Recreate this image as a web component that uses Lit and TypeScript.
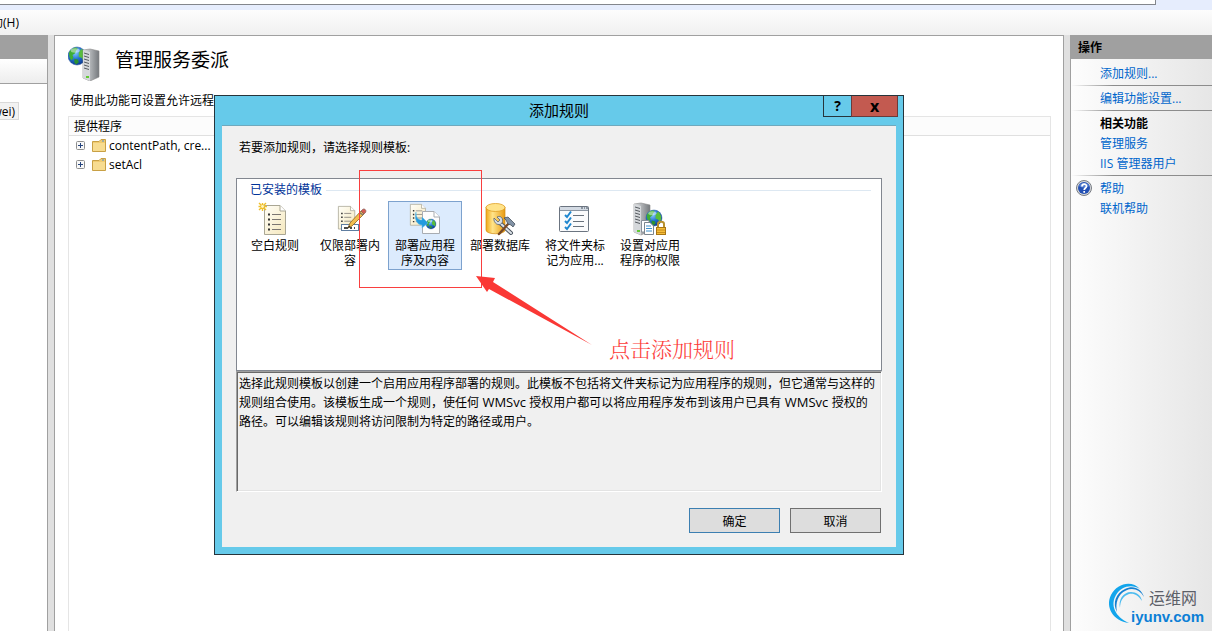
import { LitElement, html, css, svg } from "lit";
import { customElement, property, state } from "lit/decorators.js";

const globe = (cx: number, cy: number, r: number) => svg`
  <g transform="translate(${cx} ${cy}) scale(${r / 10})">
    <circle r="10" fill="url(#globe-sea)" stroke="#2a5aa0" stroke-width=".6"></circle>
    <path d="M-9 -3C-8 -7 -4 -9.500 -1 -9.500L1 -8L-1 -6L-2 -3L-5 -1L-4 2L-6 5C-8 3 -9 0 -9 -3Z" fill="#3fae35"></path>
    <path d="M2 -4L5 -8C8 -6 9.500 -2 9 2L7 5L5 2L2 1Z" fill="#58bd3c"></path>
    <path d="M-3 3L1 4L2 7L-1 9.500L-3 7Z" fill="#2c9230"></path>
    <ellipse cx="-2" cy="-6" rx="5" ry="2.500" fill="#fff" opacity=".45"></ellipse>
  </g>`;

const defs = svg`
  <defs>
    <radialGradient id="globe-sea" cx=".4" cy=".3" r=".75">
      <stop offset="0" stop-color="#8fd0ff"></stop>
      <stop offset=".5" stop-color="#2373d2"></stop>
      <stop offset="1" stop-color="#0a3287"></stop>
    </radialGradient>
    <linearGradient id="paper" x2="1" y2="1">
      <stop offset="0" stop-color="#fffef8"></stop>
      <stop offset="1" stop-color="#f5e8bd"></stop>
    </linearGradient>
    <linearGradient id="steel">
      <stop offset="0" stop-color="#e2e4e6"></stop>
      <stop offset="1" stop-color="#75797d"></stop>
    </linearGradient>
    <linearGradient id="gold">
      <stop offset="0" stop-color="#f0a818"></stop>
      <stop offset=".35" stop-color="#ffe48a"></stop>
      <stop offset="1" stop-color="#e89a10"></stop>
    </linearGradient>
  </defs>`;

const sheet = svg`
  <path d="M.5 .5H16L21.500 6V29.500H.5Z" fill="url(#paper)" stroke="#a9a694"></path>
  <path d="M16 .5V6H21.500" fill="#fff" stroke="#a9a694"></path>
  <path d="M4 9.500H6M4 14.500H6M4 19.500H6M4 24.500H6" stroke="#333" stroke-width="2"></path>
  <path d="M8 9.500H17M8 14.500H17M8 19.500H17M8 24.500H17" stroke="#7b7672"></path>`;

const tower = svg`
  <path d="M0 1L7 0L16 2V28L7 32L0 29Z" fill="url(#steel)" stroke="#888" stroke-width=".6"></path>
  <path d="M0 1L7 3V32L0 29Z" fill="#d5d8db"></path>
  <path d="M1 4L6 5.500M1 7L6 8.500M1 10L6 11.500M1 13L6 14.500M1 16L6 17.500M1 19L6 20.500" stroke="#565b60"></path>
  <rect x="3" y="27" width="3" height="2" fill="#62c935"></rect>`;

const icons: Record<string, unknown> = {
  blank: svg`
    <g transform="translate(5 2)">${sheet}</g>
    <path d="M3.500 0V8M-.5 3.500H8M0 0L7 7M7 0L0 7" stroke="#f0bf2a" stroke-width="1.400"></path>
    <circle cx="3.500" cy="3.500" r="1.400" fill="#fff6c0"></circle>`,
  content: svg`
    <g transform="translate(4 3) scale(.78)">${sheet}</g>
    <rect x="7.500" y="21.500" width="17" height="6" fill="#fff" stroke="#5f7da0"></rect>
    <path d="M10 25H14M16 25H18M20 25H21" stroke="#111" stroke-width="1.500"></path>
    <path d="M14 25L16 20L27 8L30 11L18 23Z" fill="#f2bd4e" stroke="#8d6420" stroke-width=".8"></path>
    <path d="M27 8L28.500 6.500C30 5 33 7 31.500 9.500L30 11Z" fill="#d55b52" stroke="#80605c" stroke-width=".7"></path>
    <path d="M25.500 9.500L29 12" stroke="#777" stroke-width="1.500"></path>
    <path d="M14 25L15 22.500L16.500 24Z" fill="#222"></path>`,
  application: svg`
    <g transform="translate(1 1) scale(.72)">${sheet}</g>
    <path d="M13.500 8.500H25L30.500 14V30.500H13.500Z" fill="#fdfdfd" stroke="#a8acb2"></path>
    <path d="M25 8.500V14H30.500" fill="#fff" stroke="#a8acb2"></path>
    ${globe(22, 21, 5)}
    <path d="M7 9C7 15 9 17 13 17V14L19 20L13 25V22C8 22 5 16 7 9Z" fill="#249ade" stroke="#63bce9" stroke-width=".5"></path>`,
  database: svg`
    <path d="M2 4V27C2 32 21 32 21 27V4Z" fill="url(#gold)" stroke="#d28c14" stroke-width=".7"></path>
    <ellipse cx="11.500" cy="4.500" rx="9.500" ry="4" fill="#ffe38a" stroke="#dfa024" stroke-width=".8"></ellipse>
    <path d="M16 20L27 30" stroke="#4d5660" stroke-width="4" stroke-linecap="round"></path>
    <path d="M16 20L27 30" stroke="#dce2e8" stroke-width="2" stroke-linecap="round"></path>
    <path d="M10 15L14 19L16 17L13 14C17 12 20 16 18 20C15 24 9 20 10 15Z" fill="#d5dce3" stroke="#59636e" stroke-width=".8"></path>
    <path d="M15 31L25 20" stroke="#7a4a26" stroke-width="2.500" stroke-linecap="round"></path>
    <path d="M20 15L24 14L31 21L29 24L27 22L24 21L22 17Z" fill="#8292a5" stroke="#45505c" stroke-width=".8"></path>`,
  checklist: svg`
    <rect x=".5" y="3.500" width="29" height="25" rx="1" fill="#fbfbfc" stroke="#6b7480"></rect>
    <path d="M1 5.500H29" stroke="#d3dae3" stroke-width="3"></path>
    <path d="M1 7.500H29" stroke="#8b95a2"></path>
    <path d="M22 5H24M25 5H26M27 5H29" stroke="#45505e"></path>
    <path d="M14 12.500H25M14 18.500H25M14 23.500H25" stroke="#68717c"></path>
    <path d="M6 12L8 14L12 8.500M6 18L8 20L12 14.500M6 24L8 26L12 20.500" fill="none" stroke="#1e86cf" stroke-width="2"></path>`,
  permission: svg`
    ${tower}
    ${globe(20, 15, 8)}
    <path d="M7.500 17.500H15V29H7.500Z" fill="#fff" stroke="#88919a"></path>
    <path d="M10.500 19.500H16L19.500 23V31.500H10.500Z" fill="#fff" stroke="#7b858f"></path>
    <path d="M12 23H17M12 25.500H18M12 28H18" stroke="#3e91ce"></path>
    <path d="M24 24V21C24 18 30 18 30 21V24" fill="none" stroke="#b8912f" stroke-width="2"></path>
    <rect x="22.500" y="24.500" width="9" height="7" fill="#f4bd3b" stroke="#a87514"></rect>
    <path d="M23 27H31M23 29.500H31" stroke="#c98e1c"></path>`,
};

interface Template {
  icon: string;
  label: string;
}

@customElement("rule-dialog")
class RuleDialog extends LitElement {
  @state() selected = 2;

  templates: Template[] = [
    { icon: "blank", label: "空白规则" },
    { icon: "content", label: "仅限部署内容" },
    { icon: "application", label: "部署应用程序及内容" },
    { icon: "database", label: "部署数据库" },
    { icon: "checklist", label: "将文件夹标记为应用..." },
    { icon: "permission", label: "设置对应用程序的权限" },
  ];

  static styles = css`
    :host {
      display: block;
      box-sizing: border-box;
      border: 1px solid #26343b;
      background: #66caea;
      padding: 0 7px 7px;
    }
    button {
      font: inherit;
      color: inherit;
      margin: 0;
      padding: 0;
    }
    .titlebar {
      display: grid;
      grid-template-columns: 75px 1fr 75px;
      height: 29px;
    }
    h2 {
      grid-column: 2;
      margin: 0;
      font-size: 15px;
      font-weight: 400;
      line-height: 28px;
      text-align: center;
    }
    .controls {
      display: flex;
      height: 21px;
      margin-right: -2px;
      justify-content: flex-end;
    }
    .control {
      box-sizing: border-box;
      width: 28px;
      flex: none;
      border: 1px solid #26343b;
      border-width: 0 0 1px 1px;
      background: #66caea;
      font-size: 14px;
      font-weight: 700;
      line-height: 20px;
    }
    .close {
      width: 47px;
      border-width: 0 1px 1px;
      background: #c35a50;
      border-color: #6b3a3a;
      font-size: 16px;
      line-height: 18px;
    }
    .client {
      border-top: 1px solid #6fa9bd;
      background: #f0f0f0;
      padding: 12px 14px 14px;
    }
    .prompt {
      margin: 0 0 20px;
      padding: 0 3px;
      line-height: 20px;
    }
    .list {
      box-sizing: border-box;
      height: 193px;
      border: 1px solid #828790;
      background: #fff;
    }
    .group {
      display: flex;
      align-items: center;
      gap: 4px;
      padding: 0 10px 0 13px;
      color: #003399;
      line-height: 20px;
      height: 22px;
    }
    .group::after {
      content: "";
      flex: 1;
      border-top: 1px solid #dde8f2;
    }
    .items {
      display: flex;
      gap: 1px;
      padding-left: 1px;
      align-items: flex-start;
    }
    .item {
      box-sizing: border-box;
      display: flex;
      flex-direction: column;
      align-items: center;
      gap: 3px;
      width: 74px;
      padding: 1px 5px;
      border: 1px solid transparent;
      background: none;
      line-height: 15px;
    }
    .item svg {
      width: 32px;
      height: 32px;
      overflow: visible;
    }
    .chosen {
      border-color: #7da2ce;
      background: #dcebfd;
    }
    .description {
      box-sizing: border-box;
      height: 121px;
      border: 1px solid #fff;
      border-top-color: #a0a0a0;
      border-left-color: #a0a0a0;
      box-shadow: inset 1px 1px #696969, inset -1px -1px #e3e3e3;
    }
    .description p {
      margin: 0;
      padding: 2px 5px 0 2px;
      line-height: 19px;
    }
    .description .term {
      font-size: 13px;
      line-height: 1;
    }
    .actions {
      display: flex;
      justify-content: flex-end;
      gap: 10px;
      margin-top: 16px;
      padding-right: 1px;
    }
    .action {
      box-sizing: border-box;
      width: 91px;
      height: 25px;
      border: 1px solid #707070;
      background: #dddddd;
    }
    .default {
      border-color: #3c7fb1;
    }
  `;

  render() {
    return html`
      <header class="titlebar">
        <h2>添加规则</h2>
        <div class="controls">
          <button class="control" aria-label="帮助">?</button>
          <button class="control close" aria-label="关闭">x</button>
        </div>
      </header>
      <div class="client">
        <p class="prompt">若要添加规则，请选择规则模板:</p>
        <section class="list">
          <div class="group">已安装的模板</div>
          <div class="items">
            ${this.templates.map(
              (t, i) => html`
                <button class="item ${i === this.selected ? "chosen" : ""}" @click=${() => (this.selected = i)}>
                  <svg viewBox="0 0 32 32" aria-hidden="true">${defs}${icons[t.icon]}</svg>
                  <span>${t.label}</span>
                </button>
              `
            )}
          </div>
        </section>
        <section class="description">
          <p>选择此规则模板以创建一个启用应用程序部署的规则。此模板不包括将文件夹标记为应用程序的规则，但它通常与这样的规则组合使用。该模板生成一个规则，使任何<span class="term"> WMSvc </span>授权用户都可以将应用程序发布到该用户已具有<span class="term"> WMSvc </span>授权的路径。可以编辑该规则将访问限制为特定的路径或用户。</p>
        </section>
        <div class="actions">
          <button class="action default">确定</button>
          <button class="action">取消</button>
        </div>
      </div>
    `;
  }
}

@customElement("provider-row")
class ProviderRow extends LitElement {
  @property() name = "";

  static styles = css`
    :host {
      display: flex;
      align-items: center;
      height: 19px;
      padding-left: 7px;
      line-height: 18px;
    }
    button {
      border: 0;
      padding: 0;
      background: none;
      display: flex;
      margin-right: 7px;
    }
    .folder {
      margin-right: 3px;
    }
  `;

  render() {
    return html`
      <button aria-label="展开">
        <svg width="9" height="9">
          <rect x=".5" y=".5" width="8" height="8" rx="1" fill="#f8f8f8" stroke="#8e8f8f"></rect>
          <path d="M2 4.500H7M4.500 2V7" stroke="#26457e"></path>
        </svg>
      </button>
      <svg class="folder" width="14" height="14">
        <path d="M.5 2.500H7L9 .5H13.500V12.500H.5Z" fill="#f0cb70" stroke="#c8a045"></path>
        <path d="M1 4H13V12H1Z" fill="#f7dc91"></path>
        <path d="M10 2H12" stroke="#4f8fd0"></path>
      </svg>
      <span>${this.name}</span>
    `;
  }
}

@customElement("app-root")
class AppRoot extends LitElement {
  static styles = css`
    :host {
      position: relative;
      display: flex;
      flex-direction: column;
      height: 100vh;
      overflow: hidden;
      background: #e0e0e0;
      color: #000;
      font-family: "Open Sans", "Noto Sans CJK SC", sans-serif;
      font-size: 12px;
    }
    .address {
      flex: none;
      height: 10px;
      padding-right: 56px;
      background: #e6edfd;
    }
    .field {
      height: 4px;
      border: 1px solid #83868c;
      border-width: 0 1px 1px 0;
      background: #fff;
    }
    .menubar {
      flex: none;
      height: 25px;
      background: linear-gradient(#fdfdfd, #f0f0f0);
    }
    .menu {
      display: flex;
      justify-content: flex-end;
      width: 19px;
      height: 23px;
      padding: 0;
      border: 0;
      background: none;
      font: inherit;
      white-space: nowrap;
      overflow: hidden;
      align-items: center;
    }
    .workspace {
      flex: 1;
      min-height: 0;
      display: grid;
      grid-template-columns: 48px 1fr 142px;
      column-gap: 6px;
    }
    .connections {
      border-right: 1px solid #a0a0a0;
      background: #fff;
    }
    .bar {
      height: 24px;
      background: #a0a0a0;
    }
    .tools {
      height: 24px;
      border-bottom: 1px solid #a0a0a0;
      background: linear-gradient(#fff, #ededed);
    }
    .server {
      box-sizing: border-box;
      display: flex;
      justify-content: flex-end;
      align-items: center;
      width: 19px;
      height: 18px;
      margin-top: 18px;
      padding-right: 3px;
      border: 1px solid #d9d9d9;
      border-left: 0;
      background: #f2f2f2;
      overflow: hidden;
    }
    .main {
      display: flex;
      flex-direction: column;
      border: 1px solid #a0a0a0;
      border-bottom: 0;
      background: #fff;
      padding: 9px 12px 0 13px;
    }
    .heading {
      display: flex;
      align-items: center;
      gap: 14px;
      height: 36px;
    }
    h1 {
      margin: 0;
      font-size: 19px;
      font-weight: 400;
      line-height: 28px;
      padding-bottom: 6px;
    }
    .intro {
      margin: 10px 0 5px;
      padding-left: 2px;
      line-height: 20px;
    }
    .providers {
      flex: 1;
      border: 1px solid #e5e5e5;
      border-bottom: 0;
    }
    .column {
      height: 18px;
      padding-left: 5px;
      border-bottom: 1px solid #e0e0e0;
      background: #fcfcfc;
      line-height: 20px;
    }
    .actions {
      display: flex;
      flex-direction: column;
      border-left: 1px solid #a0a0a0;
      background: linear-gradient(to right, #fdfdfd, #e6e6e6);
      line-height: 22px;
    }
    .actions h2 {
      height: 24px;
      margin: 0 0 4px;
      padding-left: 7px;
      background: #a0a0a0;
      font-size: 12px;
      line-height: 26px;
    }
    .actions h3 {
      height: 20px;
      margin: 0;
      padding-left: 29px;
      font-size: 12px;
    }
    .actions hr {
      width: 100%;
      height: 1px;
      margin: 2px 0;
      border: 0;
      background: linear-gradient(to right, transparent, #8c8c8c 30%);
    }
    .actions a {
      display: flex;
      height: 20px;
      padding-left: 29px;
      color: #0066cc;
      text-decoration: none;
    }
    .actions .help {
      padding-left: 5px;
      gap: 8px;
    }
    .help svg {
      margin-top: 2px;
    }
    .brand {
      display: grid;
      grid-template-columns: 23px 1fr;
      margin: auto 0 6px 37px;
    }
    .brand svg {
      grid-area: 1 / 1;
      width: 38px;
      height: 42px;
      overflow: visible;
    }
    .brand div {
      grid-area: 1 / 2;
    }
    .brand span {
      display: block;
      padding-left: 18px;
      padding-top: 4px;
      font-size: 16px;
      color: #5c6068;
    }
    .brand strong {
      display: block;
      font-family: "Liberation Sans", sans-serif;
      font-size: 15px;
      line-height: 16px;
      color: #0b7fd6;
    }
    .dialog {
      position: absolute;
      left: 214px;
      top: 95px;
      width: 690px;
    }
    .marker {
      position: absolute;
      left: 359px;
      top: 170px;
      box-sizing: border-box;
      width: 123px;
      height: 118px;
      border: 1px solid #f93f3f;
      pointer-events: none;
    }
    .arrow {
      position: absolute;
      left: 476px;
      top: 275px;
      pointer-events: none;
    }
    .note {
      position: absolute;
      left: 609px;
      top: 334px;
      color: #fc3b38;
      font-family: "Noto Serif CJK SC", "Noto Sans CJK SC", serif;
      font-size: 21px;
      font-weight: 300;
      line-height: 28px;
    }
  `;

  render() {
    return html`
      <div class="address"><div class="field"></div></div>
      <nav class="menubar"><button class="menu">帮助(H)</button></nav>
      <div class="workspace">
        <aside class="connections">
          <div class="bar"></div>
          <div class="tools"></div>
          <div class="server">wei)</div>
        </aside>
        <main class="main">
          <header class="heading">
            <svg width="33" height="36" aria-hidden="true">
              ${defs}${globe(9, 11, 9)}
              <g transform="translate(15 4)">${tower}</g>
            </svg>
            <h1>管理服务委派</h1>
          </header>
          <p class="intro">使用此功能可设置允许远程</p>
          <section class="providers">
            <div class="column">提供程序</div>
            <provider-row name="contentPath, cre..."></provider-row>
            <provider-row name="setAcl"></provider-row>
          </section>
        </main>
        <aside class="actions">
          <h2>操作</h2>
          <a href="#">添加规则...</a>
          <hr />
          <a href="#">编辑功能设置...</a>
          <hr />
          <h3>相关功能</h3>
          <a href="#">管理服务</a>
          <a href="#">IIS 管理器用户</a>
          <hr />
          <a class="help" href="#">
            <svg width="16" height="16" viewBox="0 0 16 16" aria-hidden="true">
              <circle cx="8" cy="8" r="7.500" fill="#d8dadd" stroke="#777b82"></circle>
              <circle cx="8" cy="8" r="6" fill="#2350b4"></circle>
              <path d="M3 6C4 2 12 2 13 6C10 8 6 8 3 6Z" fill="#7da3e8" opacity=".6"></path>
              <path d="M6 6.500C6 3.500 10.500 3.500 10.500 6.200C10.500 8 8.200 8 8.200 10M8.200 11V12.700" fill="none" stroke="#fff" stroke-width="1.700"></path>
            </svg>
            帮助
          </a>
          <a href="#">联机帮助</a>
          <div class="brand">
            <svg viewBox="0 0 38 42" aria-hidden="true">
              <path d="M21 40C5 38 -3 24 3 12C9 0 24 -3 32 6C24 1 13 3 8 12C2 22 7 34 21 40Z" fill="#12a5ec"></path>
              <path d="M9 29C4 20 8 10 17 6C25 2 33 5 36 14C32 7 25 4 18 7.500C10 11 7 20 9 29Z" fill="#1580d2"></path>
              <path d="M12 25C10 17 15 9 23 9C28 9 33 12 34 18C30 12 26 10 21 11C15 13 12 18 12 25Z" fill="#4dbcf0"></path>
            </svg>
            <div><span>运维网</span><strong>iyunv.com</strong></div>
          </div>
        </aside>
      </div>
      <rule-dialog class="dialog" role="dialog" aria-label="添加规则"></rule-dialog>
      <div class="marker"></div>
      <svg class="arrow" width="118" height="72" aria-hidden="true">
        <path d="M0 1L19 3L17 7L116 70L13 14L11 17Z" fill="#fa3835"></path>
      </svg>
      <div class="note">点击添加规则</div>
    `;
  }
}
